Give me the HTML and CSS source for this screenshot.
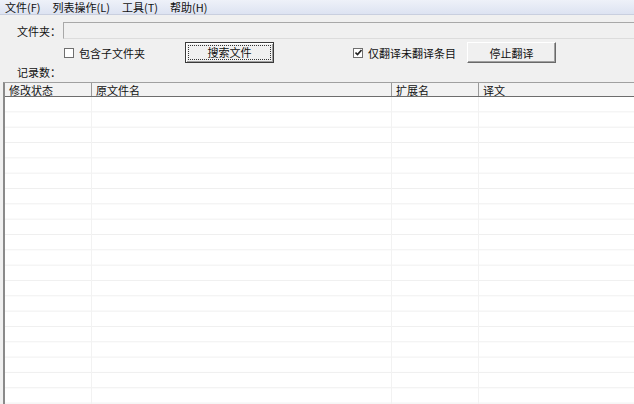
FILE: index.html
```html
<!DOCTYPE html>
<html lang="zh-CN">
<head>
    <meta charset="UTF-8">
    <title>文件名翻译</title>
    <link rel="stylesheet" href="styles.css">
</head>
<body>
    <div class="menubar">
        <span class="menu-item">文件(F)</span>
        <span class="menu-item">列表操作(L)</span>
        <span class="menu-item">工具(T)</span>
        <span class="menu-item">帮助(H)</span>
    </div>

    <div class="form">
        <div class="row row-folder">
            <label class="label">文件夹：</label>
            <div class="input"></div>
        </div>
        <div class="row row-options">
            <span class="check"><span class="box"></span>包含子文件夹</span>
            <button class="btn btn-default"><span class="focus">搜索文件</span></button>
            <span class="check check-right"><span class="box checked">
                <svg width="7" height="7" viewBox="0 0 7 7"><path d="M0.5 3.5 L2.5 5.5 L6.5 1" fill="none" stroke="#222" stroke-width="1.6"/></svg>
            </span>仅翻译未翻译条目</span>
            <button class="btn btn-stop">停止翻译</button>
        </div>
        <div class="row row-count">
            <span class="label">记录数：</span>
        </div>
    </div>

    <div class="list">
        <div class="list-head">
            <div class="col col-status">修改状态</div>
            <div class="col col-name">原文件名</div>
            <div class="col col-ext">扩展名</div>
            <div class="col col-trans">译文</div>
        </div>
        <div class="list-body">
            <div class="cell col-status"></div>
            <div class="cell col-name"></div>
            <div class="cell col-ext"></div>
            <div class="cell col-trans"></div>
        </div>
    </div>
</body>
</html>
```

FILE: styles.css
```css
* {
    margin: 0;
    padding: 0;
    box-sizing: border-box;
}
html, body {
    height: 100%;
}
body {
    font-family: "Noto Sans CJK SC", "Liberation Sans", sans-serif;
    font-size: 11px;
    color: #111;
    background: #f0f0f0;
    display: flex;
    flex-direction: column;
    overflow: hidden;
}

/* menu */
.menubar {
    height: 15px;
    display: flex;
    align-items: center;
    padding-left: 5px;
    background: linear-gradient(to bottom, #eef1f9, #dde3f2);
    border-bottom: 1px solid #c9cfdf;
}
.menu-item {
    line-height: 14px;
    margin-right: 12px;
}

/* top form */
.form {
    padding-left: 17px;
}
.row {
    display: flex;
    align-items: center;
}
.row-folder {
    margin-top: 7px;
    height: 17px;
}
.label {
    width: 46px;
}
.input {
    flex: 1;
    height: 17px;
    background: #f0f0f0;
    border: 1px solid #a8a8a8;
    border-right: none;
    border-bottom-color: #dcdcdc;
}
.row-options {
    margin-top: 2px;
    height: 23px;
}
.check {
    display: flex;
    align-items: center;
    margin-left: 47px;
}
.check-right {
    margin-left: 79px;
}
.box {
    width: 10px;
    height: 10px;
    border: 1px solid #6f6f6f;
    background: #fff;
    margin-right: 5px;
    display: flex;
    align-items: center;
    justify-content: center;
}
.btn {
    font-family: inherit;
    font-size: 11px;
    color: #111;
    width: 89px;
    height: 21px;
    background: #f0f0f0;
    border: 1px solid;
    border-color: #fff #696969 #696969 #fff;
    box-shadow: inset -1px -1px 0 #a0a0a0;
}
.btn-default {
    margin-left: 40px;
    border-color: #3a3a3a;
    box-shadow: inset 1px 1px 0 #fff, inset -1px -1px 0 #a0a0a0;
    padding: 2px;
}
.btn-default .focus {
    display: block;
    height: 100%;
    line-height: 13px;
    border: 1px dotted #333;
}
.btn-stop {
    margin-left: 11px;
}
.row-count {
    margin-top: 1px;
    height: 14px;
}

/* list */
.list {
    flex: 1;
    margin-left: 3px;
    margin-top: 3px;
    display: flex;
    flex-direction: column;
    border-left: 2px solid #8a8a8a;
    border-top: 1px solid #a0a0a0;
}
.list-head {
    display: flex;
    height: 14px;
    background: #f2f2f2;
    border-bottom: 1px solid #6d6d6d;
}
.list-head .col {
    line-height: 14px;
    padding-left: 4px;
    border-right: 1px solid #9a9a9a;
}
.col-status { width: 87px; }
.col-name { width: 300px; }
.col-ext { width: 87px; }
.col-trans { flex: 1; }
.list-head .col-trans { border-right: none; }
.list-body {
    flex: 1;
    display: flex;
    background-color: #fff;
    background-image: linear-gradient(to bottom, transparent 14.33px, #efefef 14.33px);
    background-size: 100% 15.33px;
}
.cell {
    border-right: 1px solid #f2f2f2;
}
.cell.col-trans { border-right: none; }
```
